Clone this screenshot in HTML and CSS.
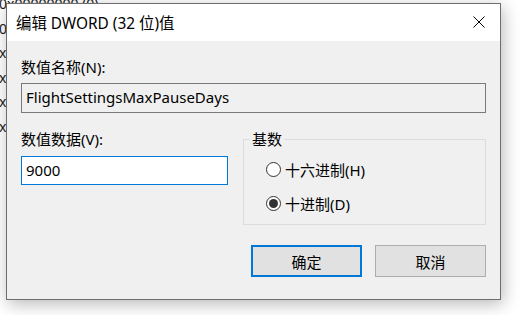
FILE: index.html
```html
<!DOCTYPE html>
<html lang="zh-CN">
<head>
  <meta charset="UTF-8">
  <title>编辑 DWORD (32 位)值</title>
  <link rel="stylesheet" href="styles.css">
</head>
<body>
  <div class="backdrop">
    <div>0x00000000 (0)</div>
    <div>02</div>
    <div>x0</div>
    <div>x1</div>
    <div>x0</div>
    <div>x(</div>
  </div>

  <div class="dialog">
    <div class="titlebar">
      <span class="title">编辑 DWORD (32 位)值</span>
      <svg class="close" width="12" height="12" viewBox="0 0 12 12">
        <path d="M0.5 0.5 L11.5 11.5 M11.5 0.5 L0.5 11.5" stroke="#000" stroke-width="1" fill="none"/>
      </svg>
    </div>

    <div class="content">
      <div class="label">数值名称(N):</div>
      <div class="field readonly">FlightSettingsMaxPauseDays</div>

      <div class="row">
        <div class="col">
          <div class="label">数值数据(V):</div>
          <div class="field active">9000</div>
        </div>

        <fieldset class="base">
          <legend>基数</legend>
          <label class="radio"><span class="dot"></span>十六进制(H)</label>
          <label class="radio checked"><span class="dot"></span>十进制(D)</label>
        </fieldset>
      </div>

      <div class="buttons">
        <button class="btn default">确定</button>
        <button class="btn">取消</button>
      </div>
    </div>
  </div>
</body>
</html>
```

FILE: styles.css
```css
body {
  margin: 0;
  width: 523px;
  height: 315px;
  overflow: hidden;
  background: #fff;
  font-family: "Segoe UI", "Noto Sans", "Noto Sans CJK SC", sans-serif;
  font-size: 15px;
  color: #000;
  position: relative;
}

.backdrop {
  margin-top: -8px;
  margin-left: -1px;
  line-height: 24.5px;
  font-size: 14px;
  color: #222;
}

.dialog {
  position: absolute;
  left: 6px;
  top: 3px;
  width: 493px;
  height: 295px;
  border: 1px solid #6e6e6e;
  background: #f0f0f0;
  box-shadow: 2px 4px 16px rgba(0, 0, 0, 0.28);
}

.titlebar {
  height: 37px;
  background: #fff;
  display: flex;
  align-items: center;
  justify-content: space-between;
  padding: 0 15px 0 9px;
}

.title {
  font-size: 15.4px;
  margin-top: -1px;
}

.close {
  display: block;
  margin-top: -1px;
}

.content {
  padding: 16px 14px 0 14px;
}

.label {
  height: 20px;
  line-height: 20px;
}

.field {
  box-sizing: border-box;
  height: 30px;
  line-height: 27px;
  padding: 0 4px;
  margin-top: 6px;
  border: 1px solid #7a7a7a;
  white-space: nowrap;
}

.field.readonly {
  background: #f0f0f0;
}

.field.active {
  height: 29px;
  margin-top: 7px;
  border-color: #0078d7;
  background: #fff;
}

.row {
  display: flex;
  gap: 15px;
  margin-top: 16px;
}

.col {
  width: 207px;
}

.base {
  flex: 1;
  margin: 0;
  padding: 10px 0 11px 0;
  border: 1px solid #dcdcdc;
  height: 96px;
  box-sizing: border-box;
}

.base legend {
  margin-left: 6px;
  padding: 0 2px;
  line-height: 20px;
}

.radio {
  display: flex;
  align-items: center;
  height: 20px;
  gap: 4px;
  margin-left: 22px;
}

.radio + .radio {
  margin-top: 14px;
}

.dot {
  box-sizing: border-box;
  width: 15px;
  height: 15px;
  border: 1px solid #333;
  border-radius: 50%;
  background: #fff;
  display: flex;
  align-items: center;
  justify-content: center;
}

.checked .dot::after {
  content: "";
  width: 9px;
  height: 9px;
  border-radius: 50%;
  background: #333;
}

.buttons {
  display: flex;
  justify-content: flex-end;
  gap: 13px;
  margin-top: 20px;
}

.btn {
  box-sizing: border-box;
  width: 111px;
  height: 32px;
  background: #e1e1e1;
  border: 1px solid #adadad;
  font-family: inherit;
  font-size: 15px;
  color: #000;
  padding: 0;
}

.btn.default {
  border: 2px solid #0078d7;
}
```
